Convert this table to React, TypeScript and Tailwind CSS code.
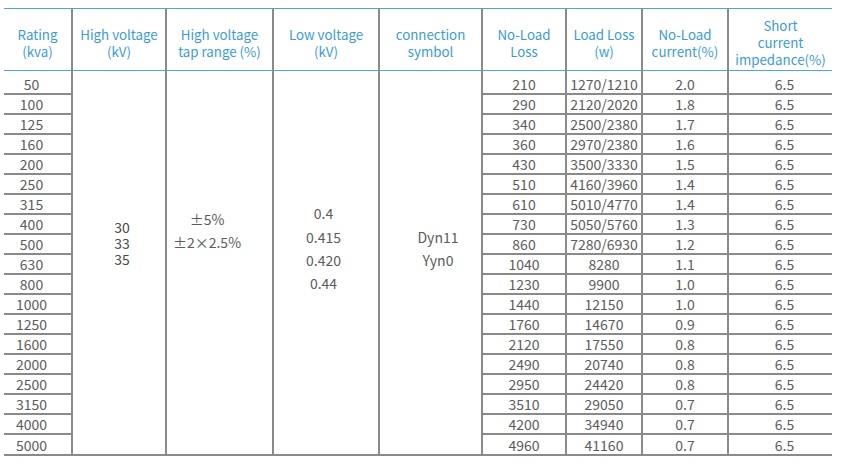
const rows: [string, string, string, string, string][] = [
  ["50", "210", "1270/1210", "2.0", "6.5"],
  ["100", "290", "2120/2020", "1.8", "6.5"],
  ["125", "340", "2500/2380", "1.7", "6.5"],
  ["160", "360", "2970/2380", "1.6", "6.5"],
  ["200", "430", "3500/3330", "1.5", "6.5"],
  ["250", "510", "4160/3960", "1.4", "6.5"],
  ["315", "610", "5010/4770", "1.4", "6.5"],
  ["400", "730", "5050/5760", "1.3", "6.5"],
  ["500", "860", "7280/6930", "1.2", "6.5"],
  ["630", "1040", "8280", "1.1", "6.5"],
  ["800", "1230", "9900", "1.0", "6.5"],
  ["1000", "1440", "12150", "1.0", "6.5"],
  ["1250", "1760", "14670", "0.9", "6.5"],
  ["1600", "2120", "17550", "0.8", "6.5"],
  ["2000", "2490", "20740", "0.8", "6.5"],
  ["2500", "2950", "24420", "0.8", "6.5"],
  ["3150", "3510", "29050", "0.7", "6.5"],
  ["4000", "4200", "34940", "0.7", "6.5"],
  ["5000", "4960", "41160", "0.7", "6.5"],
];

const headers = [
  ["Rating", "(kva)"],
  ["High voltage", "(kV)"],
  ["High voltage", "tap range (%)"],
  ["Low voltage", "(kV)"],
  ["connection", "symbol"],
  ["No-Load", "Loss"],
  ["Load Loss", "(w)"],
  ["No-Load", "current(%)"],
  ["Short", "current", "impedance(%)"],
];

export default function App() {
  return (
    <div
      className="w-[846px] h-[463px] bg-white pt-[8px] pl-[4px]"
      style={{ fontFamily: '"Noto Sans CJK SC", "Noto Sans", sans-serif' }}
    >
      <div className="grid w-[828px] grid-cols-[69px_94px_107px_106px_103px_84px_76px_86px_103px] grid-rows-[63px_24px_repeat(17,20px)_21px] text-[14px] text-[#5c5c5c]">
        {headers.map((lines, i) => (
          <div
            key={i}
            className={`flex flex-col items-center justify-center border-y border-y-[#49a7e0] pt-[6px] text-center text-[13.3px] leading-[17px] text-[#3a9bd8] ${
              i < 8 ? "border-r-2 border-r-[#8a8a8a]" : ""
            }`}
          >
            {lines.map((l) => (
              <span key={l}>{l}</span>
            ))}
          </div>
        ))}

        {rows.map((r, idx) => {
          const first = idx === 0;
          const pad = first ? "pt-[4px]" : "";
          return [
            <div
              key={`a${idx}`}
              className={`flex items-center justify-center border-r-2 border-b-2 border-[#8a8a8a] pr-[12px] leading-none ${pad}`}
            >
              {r[0]}
            </div>,
            first && (
              <div
                key="hv"
                className="row-span-19 flex flex-col items-center justify-center border-r-2 border-b-2 border-[#8a8a8a] pb-[40px] pl-[6px] leading-[16px] text-[#4a4a4a]"
              >
                <span>30</span>
                <span>33</span>
                <span>35</span>
              </div>
            ),
            first && (
              <div
                key="tap"
                className="row-span-19 flex flex-col items-center justify-center border-r-2 border-b-2 border-[#8a8a8a] pb-[64px] pr-[25px] leading-[23px]"
              >
                <span>±5%</span>
                <span>±2×2.5%</span>
              </div>
            ),
            first && (
              <div
                key="lv"
                className="row-span-19 flex flex-col items-center justify-center border-r-2 border-b-2 border-[#8a8a8a] pb-[27px] pr-[5px] leading-[23.4px]"
              >
                <span>0.4</span>
                <span>0.415</span>
                <span>0.420</span>
                <span>0.44</span>
              </div>
            ),
            first && (
              <div
                key="cn"
                className="row-span-19 flex flex-col items-center justify-center border-r-2 border-b-2 border-[#8a8a8a] pb-[27px] pl-[15px] leading-[23.5px]"
              >
                <span>Dyn11</span>
                <span>Yyn0</span>
              </div>
            ),
            ...r.slice(1).map((v, j) => (
              <div
                key={`c${idx}-${j}`}
                className={`flex items-center justify-center border-b-2 border-[#8a8a8a] leading-none ${pad} ${
                  j < 3 ? "border-r-2" : "pl-[8px]"
                }`}
              >
                {v}
              </div>
            )),
          ];
        })}
      </div>
    </div>
  );
}
